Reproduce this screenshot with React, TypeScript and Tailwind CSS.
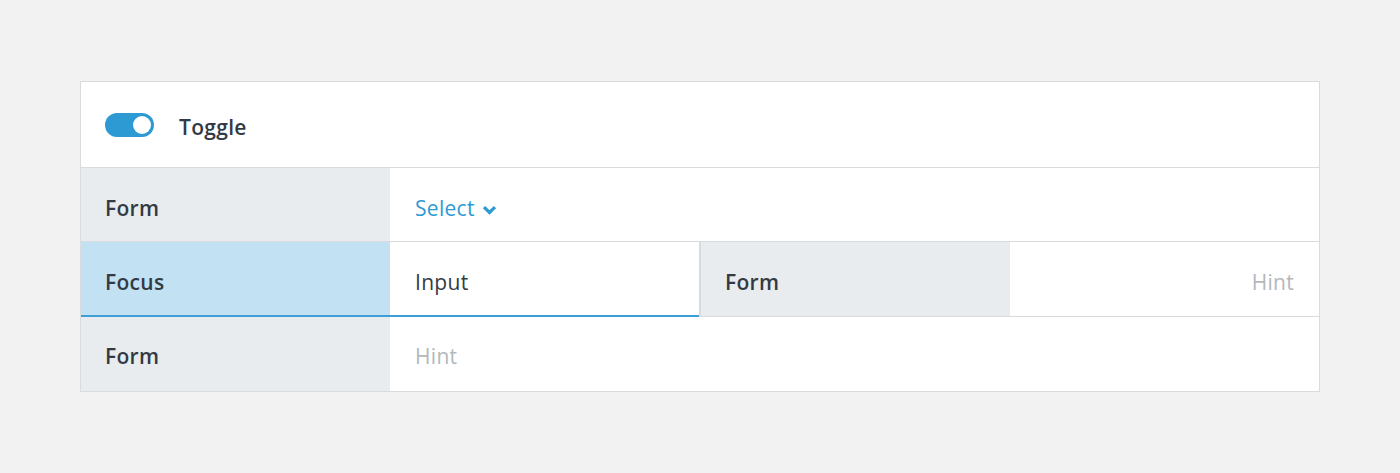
import React, { useState } from 'react';

const Label: React.FC<{ children: React.ReactNode; focus?: boolean; className?: string }> = ({ children, focus, className = '' }) => (
  <div
    className={`w-[309px] shrink-0 flex items-center pl-6 font-semibold text-[#333a44] ${
      focus ? 'bg-[#c2e1f2]' : 'bg-[#e8ecef]'
    } ${className}`}
  >
    {children}
  </div>
);

export default function App() {
  const [on, setOn] = useState(true);

  return (
    <div
      className="min-h-screen bg-[#f2f2f2] pt-[81px] px-20 text-[21px] tracking-[0.3px]"
      style={{ fontFamily: '"Open Sans", Lato, sans-serif' }}
    >
      <div className="border border-[#d9dcdf] bg-white">
        {/* Toggle */}
        <div className="h-[86px] flex items-center pl-6 border-b border-[#d9dcdf]">
          <button
            onClick={() => setOn(v => !v)}
            className={`w-[49px] h-[24px] rounded-full flex items-center px-[3px] ${
              on ? 'bg-[#2d9ad3] justify-end' : 'bg-[#cfd4d8] justify-start'
            }`}
          >
            <span className="w-[18px] h-[18px] rounded-full bg-white" />
          </button>
          <span className="ml-[25px] pt-[6px] font-semibold text-[#333a44]">Toggle</span>
        </div>

        {/* Select */}
        <div className="h-[74px] flex border-b border-[#d9dcdf]">
          <Label className="pt-[9px]">Form</Label>
          <div className="flex-1 flex items-center pl-[25px] pt-[9px] text-[#2d9ad3]">
            Select
            <svg className="ml-[7px] mt-[1px]" width="15" height="10" viewBox="0 0 15 10">
              <path d="M2 2.2 7.5 7.5 13 2.2" fill="none" stroke="currentColor" strokeWidth="3.2" />
            </svg>
          </div>
        </div>

        {/* Focus row */}
        <div className="h-[75px] flex">
          <Label focus className="pt-[9px] border-b-2 border-[#3d9fd6]">Focus</Label>
          <div className="w-[309px] flex items-center pl-[25px] pt-[9px] text-[#333a44] border-b-2 border-[#3d9fd6]">
            Input
          </div>
          <div className="flex-1 flex border-l-2 border-[#d9dcdf] border-b border-b-[#d9dcdf]">
            <Label className="w-[308px] pt-[8px]">Form</Label>
            <div className="flex-1 flex items-center justify-end pr-[25px] pt-[8px] text-[#b3b8bd]">Hint</div>
          </div>
        </div>

        {/* Hint row */}
        <div className="h-[74px] flex">
          <Label className="pt-[5px]">Form</Label>
          <div className="flex-1 flex items-center pl-[25px] pt-[5px] text-[#b3b8bd]">Hint</div>
        </div>
      </div>
    </div>
  );
}
